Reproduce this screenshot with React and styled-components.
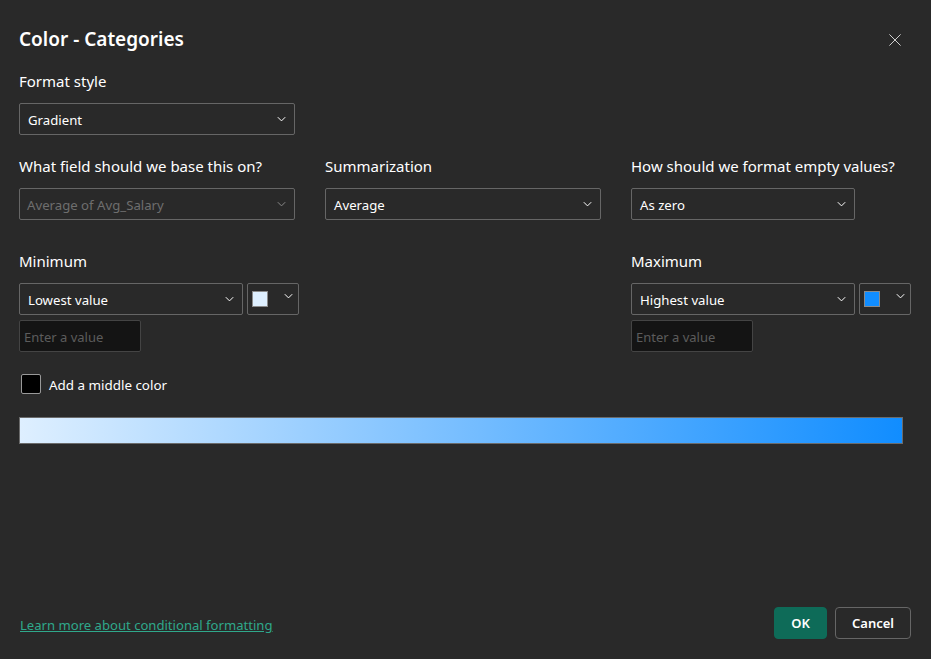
import React from "react";
import styled, { createGlobalStyle } from "styled-components";

const Global = createGlobalStyle`
  html, body { margin: 0; padding: 0; background: #292929; }
  body { font-family: "Noto Sans", "Open Sans", "Liberation Sans", sans-serif; color: #fff; }
`;

const Dialog = styled.div`
  box-sizing: border-box;
  width: 931px;
  height: 659px;
  background: #292929;
  padding: 24px 20px 20px 19px;
  display: flex;
  flex-direction: column;
`;
const Header = styled.header`
  display: flex;
  justify-content: space-between;
  align-items: center;
  height: 30px;
`;
const Title = styled.h1`
  margin: 0;
  font-size: 19px;
  font-weight: 600;
  line-height: 30px;
  color: #fff;
`;
const CloseButton = styled.button`
  all: unset;
  display: flex;
  width: 12px;
  height: 12px;
  margin-right: 10px;
  margin-top: 2px;
  color: #d0d0d0;
`;
const Label = styled.div`
  font-size: 15px;
  line-height: 20px;
  height: 20px;
  color: #fff;
  white-space: nowrap;
`;
const Section = styled.section`
  margin-top: ${(p) => p.$top}px;
`;
const Grid = styled.div`
  display: grid;
  grid-template-columns: 306px 306px 1fr;
  margin-top: ${(p) => p.$top}px;
`;
const Field = styled.div`
  display: flex;
  flex-direction: column;
`;
const Control = styled.div`
  box-sizing: border-box;
  width: ${(p) => p.$w}px;
  height: 32px;
  margin-top: ${(p) => p.$top ?? 12}px;
  border: 1px solid #666;
  border-radius: 2px;
  display: flex;
  align-items: center;
  justify-content: space-between;
  padding: 0 8px 0 ${(p) => (p.$disabled ? 7 : 8)}px;
  font-size: 13.2px;
  color: ${(p) => (p.$disabled ? "#6e6e6e" : "#fff")};
`;
const ControlText = styled.span`
  margin-top: 2px;
`;
const Row = styled.div`
  display: flex;
  gap: 4px;
  margin-top: 12px;
`;
const ColorButton = styled.div`
  box-sizing: border-box;
  width: 52px;
  height: 32px;
  border: 1px solid #666;
  border-radius: 2px;
  position: relative;
  display: flex;
  align-items: center;
  padding-left: 4px;
`;
const Swatch = styled.span`
  box-sizing: border-box;
  width: 16px;
  height: 16px;
  background: ${(p) => p.$color};
  border: 1px solid #8a8a8a;
`;
const SwatchChevron = styled.span`
  position: absolute;
  top: 9px;
  right: 5px;
  display: flex;
`;
const ValueInput = styled.div`
  box-sizing: border-box;
  width: 122px;
  height: 32px;
  margin-top: 5px;
  background: #141414;
  border: 1px solid #444;
  border-radius: 2px;
  padding: 2px 0 0 4px;
  display: flex;
  align-items: center;
  font-size: 13px;
  color: #5c5c5c;
`;
const CheckRow = styled.label`
  display: flex;
  align-items: center;
  gap: 8px;
  margin-top: 22px;
  margin-left: 2px;
  font-size: 13.4px;
  height: 20px;
`;
const CheckText = styled.span`
  margin-top: 2px;
`;
const Check = styled.span`
  box-sizing: border-box;
  width: 20px;
  height: 20px;
  background: #000;
  border: 1px solid #999;
  border-radius: 2px;
`;
const GradientBar = styled.div`
  box-sizing: border-box;
  width: 884px;
  height: 27px;
  margin-top: 23px;
  border: 1px solid #6b6b6b;
  background: linear-gradient(to right, #deefff, #118dff);
`;
const Footer = styled.footer`
  margin-top: auto;
  display: flex;
  justify-content: space-between;
  align-items: center;
  height: 32px;
`;
const LearnLink = styled.a`
  margin-left: 1px;
  margin-top: 4px;
  font-size: 13.1px;
  color: #2fa88b;
  text-decoration: underline;
`;
const Buttons = styled.div`
  display: flex;
  gap: 8px;
`;
const Button = styled.button`
  box-sizing: border-box;
  height: 32px;
  width: ${(p) => (p.$primary ? 53 : 76)}px;
  background: ${(p) => (p.$primary ? "#0e6b58" : "transparent")};
  border: 1px solid ${(p) => (p.$primary ? "#0e6b58" : "#666")};
  border-radius: 4px;
  color: #fff;
  font-family: inherit;
  font-size: 13px;
  font-weight: 600;
  padding: 0;
`;

const Chevron = ({ color = "#fff" }) => (
  <svg width="9" height="6" viewBox="0 0 9 6" fill="none" aria-hidden="true">
    <path d="M.8 1.2l3.7 3.7 3.7-3.7" stroke={color} strokeWidth="1" />
  </svg>
);

const Select = ({ w, value, disabled, top }) => (
  <Control $w={w} $disabled={disabled} $top={top}>
    <ControlText>{value}</ControlText>
    <Chevron color={disabled ? "#8a8a8a" : "#fff"} />
  </Control>
);

const ColorPick = ({ color }) => (
  <ColorButton>
    <Swatch $color={color} />
    <SwatchChevron><Chevron /></SwatchChevron>
  </ColorButton>
);

export default function App() {
  return (
    <>
      <Global />
      <Dialog>
        <Header>
          <Title>Color - Categories</Title>
          <CloseButton aria-label="Close">
            <svg width="12" height="12" viewBox="0 0 12 12" fill="none">
              <path d="M.4.4l11.2 11.2M11.6.4L.4 11.6" stroke="currentColor" strokeWidth="1" />
            </svg>
          </CloseButton>
        </Header>
        <Section $top={17}>
          <Label>Format style</Label>
          <Select w={276} value="Gradient" />
        </Section>
        <Grid $top={21}>
          <Field>
            <Label>What field should we base this on?</Label>
            <Select w={276} value="Average of Avg_Salary" disabled />
          </Field>
          <Field>
            <Label>Summarization</Label>
            <Select w={276} value="Average" />
          </Field>
          <Field>
            <Label>How should we format empty values?</Label>
            <Select w={224} value="As zero" />
          </Field>
        </Grid>
        <Grid $top={31}>
          <Field>
            <Label>Minimum</Label>
            <Row>
              <Select w={224} value="Lowest value" top={0} />
              <ColorPick color="#deefff" />
            </Row>
            <ValueInput>Enter a value</ValueInput>
          </Field>
          <div />
          <Field>
            <Label>Maximum</Label>
            <Row>
              <Select w={224} value="Highest value" top={0} />
              <ColorPick color="#118dff" />
            </Row>
            <ValueInput>Enter a value</ValueInput>
          </Field>
        </Grid>
        <CheckRow>
          <Check />
          <CheckText>Add a middle color</CheckText>
        </CheckRow>
        <GradientBar />
        <Footer>
          <LearnLink href="#">Learn more about conditional formatting</LearnLink>
          <Buttons>
            <Button $primary>OK</Button>
            <Button>Cancel</Button>
          </Buttons>
        </Footer>
      </Dialog>
    </>
  );
}
